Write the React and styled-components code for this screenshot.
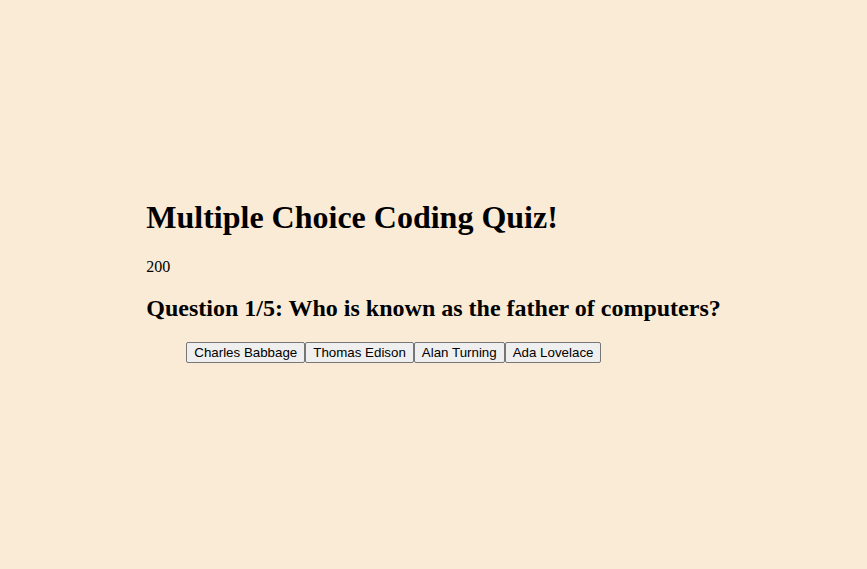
import React, {useState} from 'react'
import styled, {createGlobalStyle} from 'styled-components';

const GlobalStyle = createGlobalStyle`
    html, body {
        margin: 0;
        background: antiquewhite;
        font-family: "Liberation Serif", "Times New Roman", serif;
    }
`
const StyledPage = styled.div`
    display: flex;
    justify-content: center;
    align-items: center;
    min-height: 100vh;
    padding-bottom: 12px;
    box-sizing: border-box;
`
const StyledQuiz = styled.div``
const StyledTitle = styled.h1`
    font-size: 2em;
    margin: 0.67em 0;
`
const StyledScore = styled.p`
    margin: 1em 0;
`
const StyledQuestion = styled.h2`
    font-size: 1.5em;
    margin: 0.83em 0;
`
const StyledAnswers = styled.ul`
    margin: 1em 0;
    padding-left: 40px;
    display: flex;
`
const StyledButton = styled.button`
    font-family: "Liberation Sans", Arial, sans-serif;
    font-size: 13.33px;
    padding: 2px 7px;
    color: black;
    background: #efefef;
    border: 1px solid #767676;
    border-radius: 2px;
`

const questions = [
    {
        text: 'Who is known as the father of computers?',
        answers: ['Charles Babbage', 'Thomas Edison', 'Alan Turning', 'Ada Lovelace'],
    },
]

const App = () => {

    const [current, setCurrent] = useState(0);
    const [score, setScore] = useState(200);

    const question = questions[current];

    return(
        <StyledPage>
            <GlobalStyle />
            <StyledQuiz>
                <StyledTitle>Multiple Choice Coding Quiz!</StyledTitle>
                <StyledScore>{score}</StyledScore>
                <StyledQuestion>Question {current + 1}/5: {question.text}</StyledQuestion>
                <StyledAnswers>
                    {question.answers.map( answer => {
                        return <StyledButton key={answer} onClick={() => setScore(score)}>{answer}</StyledButton>
                    })}
                </StyledAnswers>
            </StyledQuiz>
        </StyledPage>
    );
}

export default App;
